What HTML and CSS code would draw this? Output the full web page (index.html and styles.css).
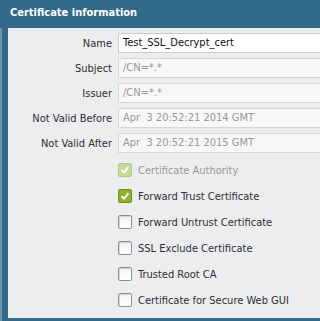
FILE: index.html
```html
<!DOCTYPE html>
<html>
<head>
<meta charset="utf-8">
<link rel="stylesheet" href="styles.css">
</head>
<body>
<div class="dialog">
  <div class="header">Certificate information</div>
  <div class="frame">
    <div class="body">
      <div class="form">
        <div class="row"><label class="lbl">Name</label><div class="field">Test_SSL_Decrypt_cert</div></div>
        <div class="row"><label class="lbl">Subject</label><div class="field disabled">/CN=*.*</div></div>
        <div class="row"><label class="lbl">Issuer</label><div class="field disabled">/CN=*.*</div></div>
        <div class="row"><label class="lbl">Not Valid Before</label><div class="field disabled">Apr&nbsp; 3 20:52:21 2014 GMT</div></div>
        <div class="row"><label class="lbl">Not Valid After</label><div class="field disabled">Apr&nbsp; 3 20:52:21 2015 GMT</div></div>
      </div>
      <div class="checks">
        <div class="check disabled"><span class="box on"><svg viewBox="0 0 14 14"><path d="M3 7.2 L5.8 10 L11 3.6" /></svg></span><span class="ctext">Certificate Authority</span></div>
        <div class="check"><span class="box on"><svg viewBox="0 0 14 14"><path d="M3 7.2 L5.8 10 L11 3.6" /></svg></span><span class="ctext">Forward Trust Certificate</span></div>
        <div class="check"><span class="box"></span><span class="ctext">Forward Untrust Certificate</span></div>
        <div class="check"><span class="box"></span><span class="ctext">SSL Exclude Certificate</span></div>
        <div class="check"><span class="box"></span><span class="ctext">Trusted Root CA</span></div>
        <div class="check"><span class="box"></span><span class="ctext">Certificate for Secure Web GUI</span></div>
      </div>
    </div>
  </div>
</div>
</body>
</html>
```
FILE: styles.css
```css
html, body {
  margin: 0;
  padding: 0;
}
body {
  width: 320px;
  height: 321px;
  overflow: hidden;
  font-family: "DejaVu Sans Condensed", "DejaVu Sans", sans-serif;
  font-size: 11px;
  color: #2e2e38;
}
.dialog {
  width: 320px;
  height: 321px;
  background: #336a89;
  display: flex;
  flex-direction: column;
}
.header {
  height: 28px;
  box-sizing: border-box;
  padding: 5px 0 0 10px;
  color: #fff;
  font-weight: bold;
  font-size: 11px;
  line-height: 16px;
}
.frame {
  flex: 1;
  display: flex;
  border-left: 2px solid #6e93a8;
  padding: 0 0 3px 6px;
  min-height: 0;
}
.body {
  flex: 1;
  background: #ecedef;
  overflow: hidden;
  padding-top: 5px;
}
.form {
  display: flex;
  flex-direction: column;
  gap: 5px;
}
.row {
  display: flex;
  align-items: center;
  height: 20px;
}
.lbl {
  width: 104px;
  text-align: right;
  padding-right: 6px;
  flex: none;
}
.field {
  flex: none;
  width: 230px;
  height: 20px;
  box-sizing: border-box;
  border: 1px solid #c9cacc;
  background: #fff;
  padding: 0 4px;
  line-height: 18px;
  font-size: 11px;
  color: #111;
  white-space: nowrap;
}
.field.disabled {
  background: #f7f7f7;
  border-color: #d6d7d9;
  color: #999;
}
.checks {
  display: flex;
  flex-direction: column;
  padding: 10px 0 0 110px;
  gap: 12px;
}
.check {
  display: flex;
  align-items: center;
  height: 14px;
}
.box {
  width: 14px;
  height: 14px;
  box-sizing: border-box;
  border: 1px solid #8e9196;
  border-radius: 2px;
  background: linear-gradient(#f4f4f4, #fff);
  box-shadow: inset 1px 1px 1px rgba(0,0,0,0.15);
  flex: none;
  display: flex;
}
.box svg {
  width: 12px;
  height: 12px;
}
.box svg path {
  fill: none;
  stroke: #fff;
  stroke-width: 2.2;
}
.box.on {
  background: #8cb52c;
  border-color: #6f8f22;
  box-shadow: none;
}
.check.disabled .box.on {
  background: #c4d99a;
  border-color: #b5c98d;
}
.ctext {
  margin-left: 6px;
  white-space: nowrap;
}
.check.disabled .ctext {
  color: #999;
}
```
